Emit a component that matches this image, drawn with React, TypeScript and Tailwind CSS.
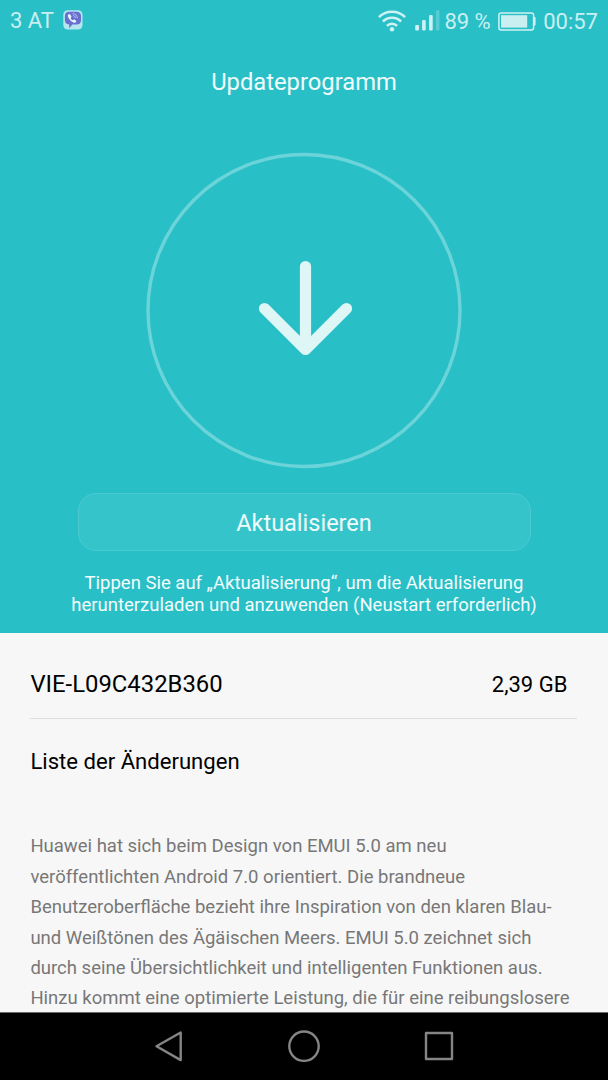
import type { ReactNode } from 'react';

const changes = [
    'Huawei hat sich beim Design von EMUI 5.0 am neu',
    'veröffentlichten Android 7.0 orientiert. Die brandneue',
    'Benutzeroberfläche bezieht ihre Inspiration von den klaren Blau-',
    'und Weißtönen des Ägäischen Meers. EMUI 5.0 zeichnet sich',
    'durch seine Übersichtlichkeit und intelligenten Funktionen aus.',
    'Hinzu kommt eine optimierte Leistung, die für eine reibungslosere',
];

function ViberIcon() {
    return (
        <svg width="20" height="20" viewBox="0 0 20 20" fill="none">
            <rect x="0.3" y="0.3" width="19.2" height="19.2" rx="4.5" fill="#b4e6ee" />
            <path d="M6 1.7h7.6c3 0 4.4 1.6 4.4 4.6v3.6c0 3-1.5 4.6-4.5 4.6H9.4L6.2 18.2v-3.8C3.3 14.2 1.9 12.7 1.9 9.9V6.3C1.9 3.3 3.2 1.7 6 1.7Z" fill="#6a6fcf" />
            <path d="M5.8 4.2c-.9.5-1.3 1.2-1 2 1.2 3.2 3.2 5.3 6.3 6.5.9.3 1.6-.1 2-.9.3-.6.2-1-.3-1.4l-1.2-.8c-.5-.3-1-.2-1.3.2l-.4.5c-1.2-.5-1.9-1.3-2.3-2.4l.5-.4c.4-.3.5-.8.2-1.3l-.9-1.5c-.4-.6-.9-.8-1.6-.5Z" fill="#e4f6fa" />
            <path d="M10 3.6c2.6.1 4.1 1.7 4.2 4.2M10.3 5.6c1.2.1 1.9.8 2 2" stroke="#b9cdf0" strokeWidth="0.9" strokeLinecap="round" />
        </svg>
    );
}

function WifiIcon() {
    return (
        <svg width="28" height="22" viewBox="0 0 28 22" fill="none" stroke="#d0f1f3" strokeWidth="2.6">
            <path d="M0.9 7.2a18.5 18.5 0 0 1 26.2 0" />
            <path d="M4.9 11.5a12.9 12.9 0 0 1 18.2 0" />
            <path d="M8.9 15.8a7.2 7.2 0 0 1 10.2 0" />
            <circle cx="14" cy="19.3" r="2.2" fill="#d0f1f3" stroke="none" />
        </svg>
    );
}

function SignalIcon() {
    return (
        <svg width="25" height="21" viewBox="0 0 25 21" fill="#d0f1f3">
            <rect x="0.2" y="15" width="3.8" height="5.5" rx="1" />
            <rect x="7.1" y="10" width="3.6" height="10.5" rx="1" />
            <rect x="14.1" y="5" width="3.6" height="15.5" rx="1" />
            <rect x="21" y="0.2" width="3.4" height="20.3" rx="1" opacity="0.28" />
        </svg>
    );
}

function BatteryIcon() {
    return (
        <svg width="38" height="19" viewBox="0 0 38 19" fill="none">
            <rect x="0.9" y="0.9" width="34.7" height="17" rx="2.2" stroke="#d0f1f3" strokeWidth="1.5" />
            <rect x="3" y="3.2" width="26.2" height="12.4" fill="#c9eff1" />
            <path d="M35.6 5h1q1 0 1 1v6.5q0 1-1 1h-1Z" fill="#d0f1f3" />
        </svg>
    );
}

function StatusBar() {
    return (
        <div className="flex h-[42px] items-center px-[10px] text-[22px] text-[#c9eff1]">
            <span className="mr-[9px] mb-[2px]">3 AT</span>
            <div className="mb-[2px]"><ViberIcon /></div>
            <div className="ml-auto flex items-center">
                <WifiIcon />
                <div className="mr-[4px] mb-[2px] ml-[9px]"><SignalIcon /></div>
                <span>89 %</span>
                <div className="mr-[7.5px] ml-[7px]"><BatteryIcon /></div>
                <span>00:57</span>
            </div>
        </div>
    );
}

function NavButton({ label, children }: { label: string; children: ReactNode }) {
    return (
        <button aria-label={label} className="flex h-full w-[135px] items-center justify-center">
            <svg width="36" height="36" viewBox="0 0 36 36" fill="none" stroke="#858585" strokeWidth="2.4" strokeLinejoin="round">
                {children}
            </svg>
        </button>
    );
}

export default function App() {
    return (
        <div className="flex h-[1080px] w-[608px] flex-col overflow-hidden bg-[#f7f7f7] font-[Roboto,sans-serif]">
            <header className="flex h-[633px] shrink-0 flex-col bg-[#29bfc7] text-white">
                <StatusBar />
                <h1 className="mt-[24px] text-center text-[23.75px] leading-8 text-[#f0fbfb]">Updateprogramm</h1>

                <svg className="mx-auto mt-[54px] shrink-0" width="318" height="318" viewBox="0 0 318 318" fill="none">
                    <circle cx="159" cy="158.5" r="156" stroke="#6bd4d9" strokeWidth="3.4" />
                    <path d="M160.5 114.5v83M119.5 156.5l41 41 41-41" stroke="#dff6f7" strokeWidth="11.2" strokeLinecap="round" strokeLinejoin="round" />
                </svg>

                <button className="mx-auto mt-[23px] h-[58px] w-[453px] shrink-0 rounded-[18px] border border-[#4bcbd1] bg-[#36c4cb] pt-[3px] text-[23.5px] text-[#f0fbfb]">
                    Aktualisieren
                </button>
                <p className="mt-[21px] text-center text-[18.5px] leading-[22px] text-[#f4fcfc]">
                    Tippen Sie auf „Aktualisierung“, um die Aktualisierung
                    <br />
                    herunterzuladen und anzuwenden (Neustart erforderlich)
                </p>
            </header>

            <main className="flex min-h-0 flex-1 flex-col overflow-hidden pl-[30.4px] text-black">
                <div className="flex h-[86px] w-[547px] shrink-0 items-center justify-between border-b border-[#dedede] pr-[10px] pt-[18px]">
                    <span className="text-[23.85px]">VIE-L09C432B360</span>
                    <span className="text-[22px]">2,39 GB</span>
                </div>
                <h2 className="mt-[26px] text-[22.1px] leading-8">Liste der Änderungen</h2>
                <p className="mt-[54.4px] whitespace-nowrap text-[18.5px] leading-[30.4px] text-[#777777]">
                    {changes.map((line) => (
                        <span key={line} className="block">{line}</span>
                    ))}
                </p>
            </main>

            <nav className="flex h-[68px] shrink-0 items-center justify-center border-t border-[#6b6b6b] bg-black pb-[2px]">
                <NavButton label="Zurück">
                    <path d="M5.500 18.200 29.700 4.500v27.600Z" />
                </NavButton>
                <NavButton label="Startbildschirm">
                    <circle cx="18" cy="18.200" r="14.700" />
                </NavButton>
                <NavButton label="Letzte Apps">
                    <rect x="5" y="5" width="26" height="26" />
                </NavButton>
            </nav>
        </div>
    );
}
